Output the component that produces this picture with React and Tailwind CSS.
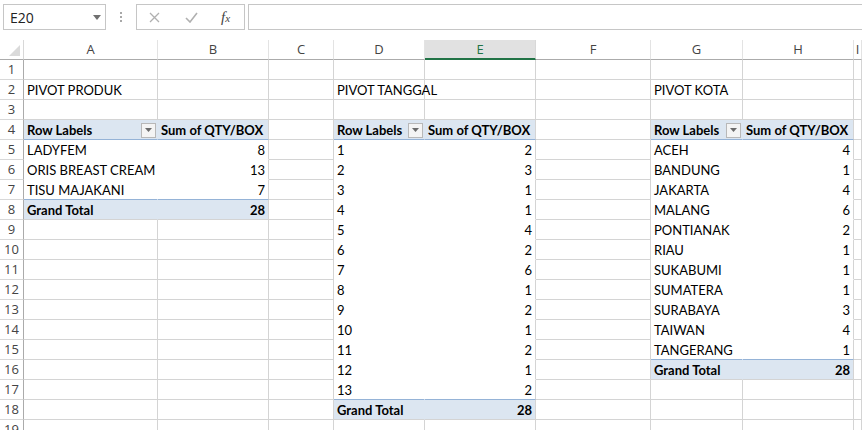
import React from 'react';

// ===== Dados das tabelas dinâmicas =====
const COLS = ['A', 'B', 'C', 'D', 'E', 'F', 'G', 'H', 'I'];
const SELECTED_COL = 'E';
const VISIBLE_ROWS = 19;

const pivots = [
  {
    title: 'PIVOT PRODUK',
    col: 1,
    start: 4,
    items: [
      ['LADYFEM', 8],
      ['ORIS BREAST CREAM', 13],
      ['TISU MAJAKANI', 7],
    ],
  },
  {
    title: 'PIVOT TANGGAL',
    col: 4,
    start: 4,
    items: [
      ['1', 2], ['2', 3], ['3', 1], ['4', 1], ['5', 4], ['6', 2], ['7', 6],
      ['8', 1], ['9', 2], ['10', 1], ['11', 2], ['12', 1], ['13', 2],
    ],
  },
  {
    title: 'PIVOT KOTA',
    col: 7,
    start: 4,
    items: [
      ['ACEH', 4], ['BANDUNG', 1], ['JAKARTA', 4], ['MALANG', 6], ['PONTIANAK', 2],
      ['RIAU', 1], ['SUKABUMI', 1], ['SUMATERA', 1], ['SURABAYA', 3], ['TAIWAN', 4],
      ['TANGERANG', 1],
    ],
  },
];

const total = (items) => items.reduce((s, [, v]) => s + v, 0);

// ===== Resolve o conteúdo de cada célula =====
const getCell = (row, col) => {
  for (const p of pivots) {
    const end = p.start + p.items.length + 1;
    if (row === 2 && col === p.col) return { kind: 'text', text: p.title };
    if (row < p.start || row > end) continue;
    if (col !== p.col && col !== p.col + 1) continue;
    const left = col === p.col;
    if (row === p.start) return { kind: 'head', left, text: left ? 'Row Labels' : 'Sum of QTY/BOX' };
    if (row === end) return { kind: 'total', left, text: left ? 'Grand Total' : String(total(p.items)) };
    const [label, value] = p.items[row - p.start - 1];
    return { kind: 'item', left, last: row === end - 1, text: left ? label : String(value) };
  }
  return { kind: 'text', text: '' };
};

const FilterButton = () => (
  <span className="ml-auto mr-[1px] mb-[1px] flex h-[15px] w-[15px] shrink-0 items-center justify-center border border-[#b8b8b8] bg-[#f4f4f4]">
    <svg width="7" height="4" viewBox="0 0 7 4">
      <path d="M0 0h7L3.5 4z" fill="#6b6b6b" />
    </svg>
  </span>
);

const Cell = ({ row, col }) => {
  const c = getCell(row, col);
  const base = "flex h-[20px] items-center whitespace-nowrap border-r border-b px-[3px] pt-[2px] font-['Lato',sans-serif] text-[13px] text-black";

  if (c.kind === 'head') {
    return (
      <div className={`${base} overflow-hidden bg-[#dce6f1] font-bold border-b-[#95b3d7] ${c.left ? 'border-r-[#dce6f1] pr-0' : 'border-r-[#d4d4d4]'}`}>
        <span>{c.text}</span>
        {c.left && <FilterButton />}
      </div>
    );
  }
  if (c.kind === 'total') {
    return (
      <div className={`${base} overflow-hidden bg-[#dce6f1] font-bold border-b-[#d4d4d4] ${c.left ? 'border-r-[#dce6f1]' : 'justify-end border-r-[#d4d4d4]'}`}>
        {c.text}
      </div>
    );
  }
  if (c.kind === 'item') {
    return (
      <div className={`${base} overflow-hidden bg-white ${c.last ? 'border-b-[#95b3d7]' : 'border-b-white'} ${c.left ? 'border-r-white' : 'justify-end border-r-[#d4d4d4]'}`}>
        {c.text}
      </div>
    );
  }
  return (
    <div className={`${base} overflow-visible border-[#d4d4d4] bg-white`}>
      {c.text && <span className="relative z-10">{c.text}</span>}
    </div>
  );
};

// ===== Barra de fórmulas =====
const FormulaBar = () => (
  <div className="flex h-[40px] items-start bg-white pt-[4px] pl-[3px] font-['Open_Sans',sans-serif]">
    <div className="flex h-[26px] w-[103px] items-center border border-[#c6c6c6] pl-[6px] pr-[4px] text-[14px] text-[#222]">
      <span>E20</span>
      <svg className="ml-auto" width="8" height="5" viewBox="0 0 8 5">
        <path d="M0 0h8L4 5z" fill="#707070" />
      </svg>
    </div>
    <div className="flex h-[26px] w-[30px] flex-col items-center justify-center gap-[2px]">
      <span className="h-[2px] w-[2px] bg-[#a8a8a8]" />
      <span className="h-[2px] w-[2px] bg-[#a8a8a8]" />
      <span className="h-[2px] w-[2px] bg-[#a8a8a8]" />
    </div>
    <div className="flex h-[26px] w-[109px] items-center border border-[#c6c6c6]">
      <svg className="ml-[12px]" width="11" height="11" viewBox="0 0 11 11">
        <path d="M1 1l9 9M10 1l-9 9" stroke="#b0b0b0" strokeWidth="1.3" />
      </svg>
      <svg className="ml-[25px]" width="13" height="11" viewBox="0 0 13 11">
        <path d="M1 6l4 4 7-9" stroke="#b0b0b0" strokeWidth="1.6" fill="none" />
      </svg>
      <span className="ml-[23px] font-['Liberation_Serif',serif] text-[15px] italic text-[#444]">
        f<span className="text-[11px]">x</span>
      </span>
    </div>
    <div className="ml-[3px] h-[26px] flex-1 border border-r-0 border-[#c6c6c6]" />
  </div>
);

// ===== Página =====
export default function App() {
  const rows = Array.from({ length: VISIBLE_ROWS }, (_, i) => i + 1);

  return (
    <div className="h-[430px] w-[862px] overflow-hidden bg-white">
      <FormulaBar />

      <div className="grid grid-cols-[24px_134px_111px_65px_91px_111px_115px_92px_111px_1fr] auto-rows-[20px] font-['Open_Sans',sans-serif] text-[13px] text-[#444]">
        {/* cabeçalho das colunas */}
        <div className="relative border-r border-b border-r-[#d8d8d8] border-b-[#ababab] bg-white">
          <svg className="absolute right-[3px] bottom-[3px]" width="11" height="11" viewBox="0 0 11 11">
            <path d="M11 0v11H0z" fill="#dadada" />
          </svg>
        </div>
        {COLS.map((c) =>
          c === SELECTED_COL ? (
            <div key={c} className="flex items-center justify-center border-r border-b-2 border-r-[#d8d8d8] border-b-[#217346] bg-[#e1e1e1] pt-[2px] text-[#217346]">
              {c}
            </div>
          ) : (
            <div key={c} className="flex items-center justify-center border-r border-b border-r-[#e3e3e3] border-b-[#ababab] bg-white pt-[1px]">
              {c}
            </div>
          )
        )}

        {/* linhas */}
        {rows.map((r) => (
          <React.Fragment key={r}>
            <div className="flex items-center justify-center border-r border-b border-r-[#ababab] border-b-[#d8d8d8] bg-white pt-[1px]">
              {r}
            </div>
            {COLS.map((_, ci) => (
              <Cell key={ci} row={r} col={ci + 1} />
            ))}
          </React.Fragment>
        ))}
      </div>
    </div>
  );
}
